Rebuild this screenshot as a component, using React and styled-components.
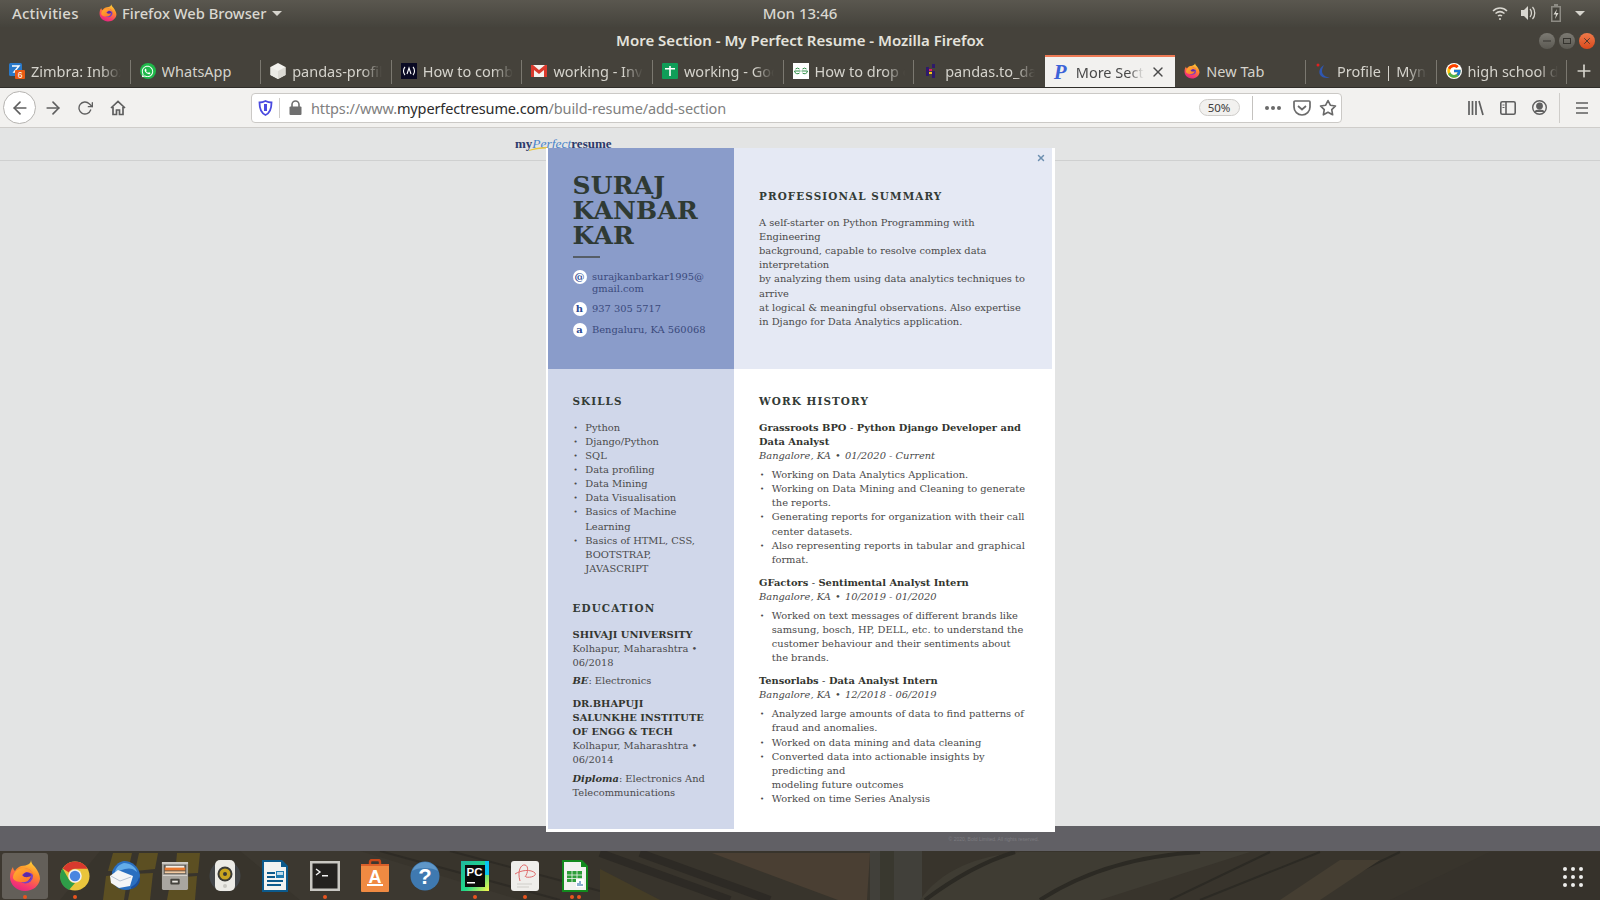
import React from "react";
import styled, { createGlobalStyle } from "styled-components";
import { FaWhatsapp } from "react-icons/fa";
import { FcGoogle } from "react-icons/fc";
import { FiArrowLeft, FiArrowRight, FiRotateCw, FiStar, FiX, FiPlus } from "react-icons/fi";

const GlobalStyle = createGlobalStyle`
  html, body { margin: 0; padding: 0; height: 100%; overflow: hidden; }
  body { font-family: "Noto Sans", sans-serif; background: #e3e4e4; }
  #root { height: 900px; }
  * { box-sizing: border-box; }
`;

const Screen = styled.div`
  width: 1600px;
  height: 900px;
  display: flex;
  flex-direction: column;
  overflow: hidden;
`;

/* desktop panel + window title */
const TopBar = styled.div`
  height: 27px;
  flex: none;
  display: flex;
  align-items: center;
  position: relative;
  padding: 0 0 1px 12px;
  color: #d9d7d0;
  font-size: 15px;
  font-weight: 500;
  background: linear-gradient(#5a574f, #45433c);
`;

const Activities = styled.span`
  width: 87px;
  letter-spacing: 0.2px;
`;

const AppMenu = styled.div`
  display: flex;
  align-items: center;
  gap: 5px;
  font-size: 14.7px;
`;

const Caret = styled.i`
  display: block;
  width: 0;
  height: 0;
  border-left: 5px solid transparent;
  border-right: 5px solid transparent;
  border-top: 5px solid #d6d4cd;
`;

const Clock = styled.span`
  position: absolute;
  left: 0;
  right: 0;
  top: 3px;
  text-align: center;
  pointer-events: none;
`;

const Tray = styled.div`
  margin-left: auto;
  display: flex;
  align-items: center;
  gap: 13.5px;
  padding-right: 15px;
`;

const TitleBar = styled.div`
  height: 28px;
  flex: none;
  position: relative;
  display: flex;
  align-items: center;
  justify-content: center;
  padding-bottom: 2px;
  color: #e4e2dc;
  font-size: 15px;
  font-weight: 600;
  background: #45423b;
`;

const WindowButtons = styled.div`
  position: absolute;
  right: 5px;
  top: 6px;
  display: flex;
  gap: 4px;
`;

const WindowButton = styled.span`
  width: 16px;
  height: 16px;
  border-radius: 50%;
  display: flex;
  align-items: center;
  justify-content: center;
  color: #35332e;
  background: ${(p) => (p.$close ? "linear-gradient(#ee7a4a, #d9491c)" : "linear-gradient(#7c7a73, #5b5952)")};
`;

const TabStrip = styled.div`
  height: 33px;
  flex: none;
  display: flex;
  background: #45423b;
  border-bottom: 1px solid #2f2d29;
`;

const Tab = styled.div`
  width: 130.6px;
  flex: none;
  height: 32px;
  display: flex;
  align-items: center;
  padding-left: 9px;
  gap: 6px;
  font-size: 14.5px;
  color: ${(p) => (p.$active ? "#4a4a4a" : "#d5d3cc")};
  background: ${(p) => (p.$active ? "#f2f1ef" : "transparent")};
  border-top: ${(p) => (p.$active ? "2px solid #ee7a55" : "0")};
  position: relative;
  &::after {
    content: "";
    display: ${(p) => (p.$sep ? "block" : "none")};
    position: absolute;
    right: 0;
    top: 5px;
    height: 24px;
    width: 1px;
    background: #7b7870;
  }
`;

const TabIcon = styled.span`
  width: 16px;
  height: 16px;
  flex: none;
  display: flex;
`;

const TabLabel = styled.span`
  width: ${(p) => p.$w || 90}px;
  flex: none;
  overflow: hidden;
  white-space: nowrap;
  -webkit-mask-image: ${(p) => (p.$plain ? "none" : "linear-gradient(90deg, #000 78%, transparent)")};
  mask-image: ${(p) => (p.$plain ? "none" : "linear-gradient(90deg, #000 78%, transparent)")};
`;

const NewTab = styled.div`
  flex: 1;
  display: flex;
  align-items: center;
  justify-content: center;
  color: #d5d3cc;
`;

const WhatsappBadge = styled.span`
  width: 16px;
  height: 16px;
  border-radius: 50%;
  background: #1fb84a;
  color: #fff;
  display: flex;
  align-items: center;
  justify-content: center;
`;

/* navigation toolbar */
const NavBar = styled.div`
  height: 40px;
  flex: none;
  display: flex;
  align-items: center;
  background: #f2f1ef;
  border-bottom: 1px solid #cfcdca;
  padding-left: 3px;
  color: #5f5f5f;
`;

const BackButton = styled.div`
  width: 33px;
  height: 33px;
  flex: none;
  border-radius: 50%;
  border: 1px solid #b5b3b0;
  background: #fff;
  display: flex;
  align-items: center;
  justify-content: center;
`;

const NavButton = styled.div`
  width: 32.5px;
  flex: none;
  display: flex;
  align-items: center;
  justify-content: center;
`;

const NavGroup = styled.div`
  display: flex;
  margin-right: 117px;
  margin-left: 0.5px;
`;

const AddressBar = styled.div`
  width: 1091px;
  height: 30px;
  flex: none;
  display: flex;
  align-items: center;
  background: #fff;
  border: 1px solid #cbc9c6;
  border-radius: 4px;
`;

const ShieldBox = styled.div`
  width: 28px;
  height: 20px;
  flex: none;
  display: flex;
  align-items: center;
  justify-content: center;
  border-right: 1px solid #cfcdca;
`;

const LockBox = styled.div`
  width: 31px;
  flex: none;
  display: flex;
  justify-content: center;
`;

const UrlText = styled.span`
  font-size: 14.5px;
  letter-spacing: -0.13px;
  color: #808080;
  white-space: nowrap;
  b { font-weight: 400; color: #2b2b2b; }
`;

const ZoomPill = styled.span`
  margin-left: auto;
  width: 41px;
  height: 17px;
  border: 1px solid #cfcdca;
  border-radius: 9px;
  background: #f2f1ef;
  color: #3c3c3c;
  font-size: 11.5px;
  display: flex;
  align-items: center;
  justify-content: center;
`;

const PageActions = styled.div`
  display: flex;
  align-items: center;
  height: 24px;
  margin-left: 12px;
  padding-left: 8.5px;
  padding-right: 4px;
  gap: 8px;
  border-left: 1px solid #c4c2bf;
`;

const Tools = styled.div`
  flex: 1;
  display: flex;
  align-items: center;
  padding-left: 126px;
  gap: 16px;
`;

const ToolDivider = styled.i`
  display: block;
  width: 1px;
  height: 30px;
  margin: 0 -1px 0 -4px;
  background: #cfcdca;
`;

/* page */
const Page = styled.div`
  flex: 1;
  min-height: 0;
  position: relative;
  display: flex;
  flex-direction: column;
  background: #e3e4e4;
`;

const SiteHeader = styled.div`
  height: 33px;
  flex: none;
  padding: 8px 0 0 515px;
  border-bottom: 1px solid #cfd0d0;
  font-family: "Liberation Serif", serif;
  font-size: 13px;
  line-height: 15px;
  font-weight: 700;
  color: #2d3a6b;
`;

const LogoMark = styled.em`
  color: #4a83c8;
  font-weight: 400;
  font-size: 13.5px;
`;

const LogoSwoosh = styled.svg`
  position: absolute;
  left: 529px;
  top: 18px;
`;

const PageBody = styled.div`
  flex: 1;
`;

const SiteFooter = styled.div`
  height: 25px;
  flex: none;
  background: #616065;
  color: #7d7c81;
  font-family: "Liberation Sans", sans-serif;
  font-size: 5px;
  text-align: right;
  padding: 10px 561px 0 0;
`;

/* resume preview */
const Modal = styled.div`
  position: absolute;
  left: 546px;
  top: 20px;
  width: 509px;
  height: 684px;
  padding: 0 3px 3px 2px;
  background: #fff;
  display: grid;
  grid-template-columns: 186px 318px;
  grid-template-rows: 221px 460px;
  font-family: "DejaVu Serif", serif;
  font-size: 9.9px;
  line-height: 14.15px;
  color: #4a4a4a;
`;

const CloseMark = styled.span`
  position: absolute;
  top: 5px;
  right: 9px;
  color: #6d8fb0;
  display: flex;
`;

const NameCell = styled.div`
  background: #8a9cca;
  padding: 25px 24.5px 0;
`;

const Name = styled.h1`
  margin: 0;
  font-size: 25px;
  line-height: 25px;
  font-weight: 700;
  letter-spacing: 0.2px;
  color: #2f3a34;
`;

const NameRule = styled.div`
  width: 27px;
  height: 2px;
  margin: 8px 0 13px;
  background: #565e68;
`;

const ContactRow = styled.div`
  display: flex;
  gap: 5.5px;
  margin-bottom: 8px;
  color: #3a4a7c;
  line-height: 12px;
`;

const ContactBadge = styled.span`
  width: 14px;
  height: 14px;
  flex: none;
  margin-top: -1px;
  border-radius: 50%;
  background: #fff;
  color: #2c4a94;
  font-size: 10px;
  font-weight: 700;
  line-height: 13px;
  text-align: center;
`;

const ContactText = styled.span`
  overflow-wrap: anywhere;
  min-width: 0;
`;

const SummaryCell = styled.div`
  background: #e5e9f4;
  padding: 41px 25px 0;
`;

const SideCell = styled.div`
  background: #d0d7ea;
  padding: 25px 24.5px 0;
`;

const MainCell = styled.div`
  background: #fff;
  padding: 25px 25px 0;
`;

const Heading = styled.h2`
  margin: ${(p) => p.$top || 0}px 0 12.5px;
  font-size: 10.4px;
  line-height: 14px;
  font-weight: 700;
  letter-spacing: 1.1px;
  color: #333b36;
`;

const Paragraph = styled.p`
  margin: 0;
  line-height: 14.2px;
`;

const BulletList = styled.ul`
  list-style: none;
  margin: 0 0 ${(p) => p.$after || 0}px;
  padding: 0;
`;

const Bullet = styled.li`
  display: flex;
  &::before {
    content: "•";
    flex: none;
    width: 11.8px;
    padding-left: 1px;
    font-size: 7px;
  }
`;

const Strong = styled.div`
  font-weight: 700;
  color: #33352f;
  margin-top: ${(p) => p.$top || 0}px;
`;

const Dash = styled.span`
  font-weight: 400;
`;

const JobMeta = styled.div`
  font-style: italic;
  margin-bottom: 5px;
`;

const MetaDot = styled.span`
  margin: 0 1px;
`;

const Degree = styled.div`
  margin-top: 4px;
  b { font-style: italic; color: #33352f; }
`;

/* dock */
const Dock = styled.div`
  height: 49px;
  flex: none;
  position: relative;
  display: flex;
  background: #37332c;
  overflow: hidden;
`;

const Wallpaper = styled.svg`
  position: absolute;
  left: 0;
  top: 0;
`;

const DockItem = styled.div`
  width: 50px;
  height: 49px;
  flex: none;
  position: relative;
  display: flex;
  align-items: center;
  justify-content: center;
  &::before {
    content: "";
    display: ${(p) => (p.$focus ? "block" : "none")};
    position: absolute;
    left: 2px;
    right: 2px;
    top: 2px;
    bottom: 1px;
    border-radius: 3px;
    background: rgba(255, 255, 255, 0.2);
  }
`;

const DockIcon = styled.span`
  position: relative;
  display: flex;
`;

const DockDots = styled.div`
  position: absolute;
  bottom: 1px;
  left: 0;
  right: 0;
  display: flex;
  justify-content: center;
  gap: 3px;
`;

const Dot = styled.i`
  width: 4px;
  height: 4px;
  border-radius: 50%;
  background: #e9541f;
`;

const AppGrid = styled.div`
  position: absolute;
  right: 17px;
  top: 16px;
  display: grid;
  grid-template-columns: repeat(3, 4px);
  gap: 4px;
  i { width: 4px; height: 4px; border-radius: 50%; background: #eeeeec; }
`;

const Firefox = ({ size = 16 }) => (
  <svg width={size} height={size} viewBox="0 0 32 32">
    <defs>
      <linearGradient id="ffOuter" x1="0.75" y1="0" x2="0.35" y2="1">
        <stop offset="0" stopColor="#ffdc3c" />
        <stop offset="0.4" stopColor="#ff8a2a" />
        <stop offset="0.8" stopColor="#f7396f" />
        <stop offset="1" stopColor="#e3267f" />
      </linearGradient>
      <linearGradient id="ffTail" x1="0" y1="0" x2="1" y2="1">
        <stop offset="0" stopColor="#ffb52e" />
        <stop offset="1" stopColor="#ff6a2c" />
      </linearGradient>
    </defs>
    <path d="M22 0c0 3 2 5 4 7 3 4 5 8 5 12-1 7-7 12-15 12C8 31 1 25 1 17c0-4 1-7 3-10 0 2 1 3 2 4 1-2 3-4 6-5 3 0 6-1 8-2 1-1 2-2 2-4z" fill="url(#ffOuter)" />
    <circle cx="16.5" cy="16" r="7.5" fill="#7a3fc4" />
    <circle cx="18" cy="16.5" r="4" fill="#5a2aa8" />
    <path d="M4 18c0-6 5-10 11-10 5 0 9 3 10 8-2-3-5-4-8-4l-3 2c-1 1-1 2 0 2 2 2 6 1 8 0-1 4-5 7-9 6-4 0-8-1-9-4z" fill="url(#ffTail)" />
  </svg>
);

const Chrome = () => (
  <svg width="30" height="30" viewBox="0 0 32 32">
    <circle cx="16" cy="16" r="15.5" fill="#e9c53c" />
    <path d="M16 .5A15.5 15.5 0 0 1 29.4 8.3H16a7.5 7.5 0 0 0-6.5 3.900L2.800 8A15.500 15.500 0 0 1 16 .5z" fill="#d8392e" />
    <path d="M2.800 8l6.700 11.700a7.500 7.500 0 0 0 6.500 3.800L9.500 31A15.500 15.500 0 0 1 2.800 8z" fill="#2f9e48" />
    <circle cx="16" cy="16" r="7.2" fill="#f2f2f2" />
    <circle cx="16" cy="16" r="5.6" fill="#4a86e0" />
  </svg>
);

const Thunderbird = () => (
  <svg width="32" height="32" viewBox="0 0 32 32">
    <path d="M15 1c8 0 15 6 16 14 0 8-6 15-14 15-6 0-11-3-13-8L3 12C5 6 9 2 15 1z" fill="#2a6fc0" />
    <path d="M15 3c6 0 12 4 13 9-4-4-8-4-12-3L6 12c1-5 5-8 9-9z" fill="#63ace8" />
    <path d="M1 16l8-6 15 6-3 10-11 2-8-5z" fill="#f4f5f7" />
    <path d="M2 16l9 5 11-4" fill="none" stroke="#b9c3d2" strokeWidth="1" />
    <path d="M22 27c4-2 7-5 8-10l1 2c0 5-4 9-9 10z" fill="#1c4e9a" />
  </svg>
);

const Files = () => (
  <svg width="28" height="32" viewBox="0 0 30 32">
    <rect x="1" y="1" width="28" height="30" rx="1.5" fill="#a9a6a0" />
    <rect x="1" y="1" width="28" height="2" fill="#cfccc6" />
    <rect x="3" y="4" width="24" height="10" fill="#5d5a54" />
    <rect x="5" y="5" width="20" height="3" fill="#f2f0ea" />
    <rect x="4" y="7" width="22" height="3" fill="#e8782e" />
    <rect x="4" y="11" width="22" height="2" fill="#f2c9a0" />
    <rect x="2" y="15" width="26" height="1" fill="#d8d5cf" />
    <rect x="10" y="19" width="10" height="6" rx="1" fill="#45433d" />
    <rect x="12" y="21" width="6" height="2" fill="#e8e6e0" />
  </svg>
);

const Speaker = () => (
  <svg width="32" height="34" viewBox="0 0 32 34">
    <circle cx="16" cy="17" r="15.5" fill="#5a6b80" opacity="0.35" />
    <rect x="6" y="1" width="20" height="31" rx="5" fill="#ecebe6" />
    <circle cx="16" cy="15" r="7.5" fill="#3a3a36" />
    <circle cx="16" cy="15" r="5.5" fill="#c9a520" />
    <circle cx="16" cy="15" r="2" fill="#3a3a36" />
    <circle cx="16" cy="27" r="2" fill="#c9c8c2" />
  </svg>
);

const Writer = () => (
  <svg width="26" height="32" viewBox="0 0 26 32">
    <path d="M0 0h20l6 6v26H0z" fill="#0c5a8c" />
    <path d="M2 2h17l5 5v23H2z" fill="#f2f2f0" />
    <path d="M19 0l7 7h-7z" fill="#0c5a8c" />
    <path d="M5 12h8v2H5zM5 16h8v2H5zM5 20h16v2H5zM5 24h14v2H5z" fill="#0c5a8c" />
    <rect x="14" y="11" width="8" height="7" fill="#1f7ab0" />
    <rect x="15" y="12" width="6" height="3" fill="#bfdcec" />
  </svg>
);

const Terminal = () => (
  <svg width="30" height="30" viewBox="0 0 30 30">
    <rect x="0" y="0" width="30" height="30" fill="#c9c7c2" />
    <rect x="2.5" y="2.5" width="25" height="25" fill="#23211f" />
    <path d="M6 8l4 3-4 3" fill="none" stroke="#f2f2f2" strokeWidth="1.4" />
    <rect x="12" y="14" width="6" height="1.5" fill="#f2f2f2" />
  </svg>
);

const Software = () => (
  <svg width="28" height="34" viewBox="0 0 28 34">
    <path d="M9 6V3c0-1 1-2 2-2h6c1 0 2 1 2 2v3" fill="none" stroke="#c9481a" strokeWidth="2.4" />
    <path d="M0 6h28v26a1 1 0 0 1-1 1H1a1 1 0 0 1-1-1z" fill="#f08a42" />
    <rect x="0" y="5" width="28" height="2" fill="#d9602a" />
    <text x="14" y="24" textAnchor="middle" fontFamily="Liberation Sans" fontWeight="700" fontSize="18" fill="#fff">A</text>
    <rect x="6" y="25" width="16" height="2" fill="#fff" />
  </svg>
);

const Help = () => (
  <svg width="30" height="30" viewBox="0 0 30 30">
    <circle cx="15" cy="15" r="14.5" fill="#3f79b0" />
    <path d="M15 1a14 14 0 0 1 13 9C22 6 8 6 2 10A14 14 0 0 1 15 1z" fill="#5f97c9" />
    <text x="15" y="23" textAnchor="middle" fontFamily="Liberation Sans" fontWeight="700" fontSize="22" fill="#fff">?</text>
  </svg>
);

const PyCharm = () => (
  <svg width="28" height="30" viewBox="0 0 28 30">
    <defs>
      <linearGradient id="pcBg" x1="0" y1="0" x2="1" y2="1">
        <stop offset="0" stopColor="#1fb6a0" />
        <stop offset="0.55" stopColor="#21d789" />
        <stop offset="1" stopColor="#fcf84a" />
      </linearGradient>
    </defs>
    <rect width="28" height="30" fill="url(#pcBg)" />
    <rect x="24" y="0" width="4" height="14" fill="#07c3f2" />
    <rect x="4" y="4" width="20" height="22" fill="#0b0b0b" />
    <text x="5.5" y="15" fontFamily="Liberation Sans" fontWeight="700" fontSize="11.5" fill="#fff">PC</text>
    <rect x="6" y="21" width="8" height="1.5" fill="#fff" />
  </svg>
);

const Evince = () => (
  <svg width="28" height="30" viewBox="0 0 28 30">
    <rect x="0" y="0" width="28" height="30" rx="3" fill="#efeeeb" />
    <path d="M4 13c6-4 16-5 20-1 2 3-5 5-9 4M9 20C6 10 10 3 14 4c4 1 3 8 0 12" fill="none" stroke="#e06a6a" strokeWidth="1" />
    <path d="M6 23h15M6 26h12" stroke="#cfcec9" strokeWidth="1" />
  </svg>
);

const Calc = () => (
  <svg width="26" height="32" viewBox="0 0 26 32">
    <path d="M0 0h20l6 6v26H0z" fill="#138a1e" />
    <path d="M2 2h17l5 5v23H2z" fill="#f2f2f0" />
    <path d="M19 0l7 7h-7z" fill="#138a1e" />
    <rect x="5" y="11" width="15" height="11" fill="#2d9e3a" />
    <path d="M5 15h15M5 18.5h15M10 11v11M15 11v11" stroke="#f2f2f0" strokeWidth="0.8" />
    <rect x="14" y="19" width="8" height="8" fill="#fff" />
    <path d="M16 26v-3M18 26v-5M20 26v-2" stroke="#3f79b0" strokeWidth="1.2" />
  </svg>
);

const Zimbra = () => (
  <svg width="16" height="16" viewBox="0 0 16 16">
    <rect width="13" height="13" rx="1.5" fill="#2a79c9" />
    <path d="M3 3h7L5 9h5" fill="none" stroke="#fff" strokeWidth="1.4" />
    <rect x="6" y="7" width="10" height="9" rx="1" fill="#ea5a14" />
    <text x="11" y="15" textAnchor="middle" fontFamily="Liberation Sans" fontSize="8.5" fill="#fff">6</text>
  </svg>
);

const Cube = () => (
  <svg width="16" height="16" viewBox="0 0 16 16">
    <path d="M8 0l7.500 4v8L8 16 .5 12V4z" fill="#f4f3ef" />
    <path d="M8 8l7.500-4v8L8 16z" fill="#dcdad4" />
    <path d="M8 8L.5 4v8L8 16z" fill="#ecebe6" />
  </svg>
);

const CodeCamp = () => (
  <svg width="16" height="16" viewBox="0 0 16 16">
    <rect width="16" height="16" fill="#0a0a23" />
    <path d="M4 4C2 6 2 10 4 12M12 4c2 2 2 6 0 8M6 11l2-6 2 6" fill="none" stroke="#fff" strokeWidth="1.1" />
  </svg>
);

const Gmail = () => (
  <svg width="16" height="16" viewBox="0 0 16 16">
    <rect y="2" width="16" height="12" fill="#f4f3ef" />
    <path d="M0 2h2l6 5 6-5h2v12h-3V7L8 11 3 7v7H0z" fill="#d93a2d" />
  </svg>
);

const Sheets = () => (
  <svg width="16" height="16" viewBox="0 0 16 16">
    <rect width="16" height="16" rx="1" fill="#0f9d58" />
    <path d="M3 5h4.200V3h1.600v2H13v1.600H8.800V13H7.200V6.600H3z" fill="#fff" />
  </svg>
);

const GeeksIcon = () => (
  <svg width="16" height="16" viewBox="0 0 16 16">
    <rect width="16" height="16" fill="#fff" />
    <path d="M7.500 8H1.500a3 3 0 0 0 5 2M8.500 8h6a3 3 0 0 1-5 2M6.500 6a3 3 0 0 0-4 0M9.500 6a3 3 0 0 1 4 0" fill="none" stroke="#2f8d46" strokeWidth="1" />
  </svg>
);

const PandasIcon = () => (
  <svg width="16" height="16" viewBox="0 0 16 16">
    <path d="M3 4h3v9H3zM9 1h3v4H9zM9 8h3v7H9z" fill="#2e1a6b" />
    <path d="M6 6h3v2H6z" fill="#e8166b" />
    <path d="M6 9h3v2H6z" fill="#f5c518" />
  </svg>
);

const Myna = () => (
  <svg width="16" height="16" viewBox="0 0 16 16">
    <path d="M9 2C4 5 3 10 6 13c2 2 6 2 9 2-4-1-8-3-8-7 0-2 1-4 2-6z" fill="#2f56b0" />
    <circle cx="3" cy="2" r="1.5" fill="#e02020" />
  </svg>
);

const ResumeP = styled.span`
  font-family: "Liberation Serif", serif;
  font-style: italic;
  font-weight: 700;
  font-size: 21px;
  line-height: 16px;
  color: #3d63d8;
`;

const tabs = [
  { icon: <Zimbra />, label: "Zimbra: Inbox (6)", sep: true },
  { icon: <WhatsappBadge><FaWhatsapp size={13} /></WhatsappBadge>, label: "WhatsApp", sep: true, plain: true },
  { icon: <Cube />, label: "pandas-profiling", sep: true },
  { icon: <CodeCamp />, label: "How to combine", sep: true },
  { icon: <Gmail />, label: "working - Invites", sep: true },
  { icon: <Sheets />, label: "working - Google", sep: true },
  { icon: <GeeksIcon />, label: "How to drop one", sep: true },
  { icon: <PandasIcon />, label: "pandas.to_datetime" },
  { icon: <ResumeP>P</ResumeP>, label: "More Section", active: true, w: 68 },
  { icon: <Firefox />, label: "New Tab", sep: true, plain: true },
  { icon: <Myna />, label: "Profile | Myna", sep: true },
  { icon: <FcGoogle size={16} style={{ background: "#fff", borderRadius: "50%" }} />, label: "high school diploma", sep: true },
];

const dockApps = [
  { icon: <Firefox size={32} />, dots: 1, focus: true },
  { icon: <Chrome />, dots: 1 },
  { icon: <Thunderbird /> },
  { icon: <Files /> },
  { icon: <Speaker /> },
  { icon: <Writer /> },
  { icon: <Terminal />, dots: 1 },
  { icon: <Software /> },
  { icon: <Help /> },
  { icon: <PyCharm />, dots: 1 },
  { icon: <Evince />, dots: 1 },
  { icon: <Calc />, dots: 2 },
];

const skills = [
  "Python",
  "Django/Python",
  "SQL",
  "Data profiling",
  "Data Mining",
  "Data Visualisation",
  "Basics of Machine Learning",
  "Basics of HTML, CSS, BOOTSTRAP, JAVASCRIPT",
];

const jobs = [
  {
    company: "Grassroots BPO",
    role: "Python Django Developer and Data Analyst",
    place: "Bangalore, KA",
    dates: "01/2020 - Current",
    points: [
      "Working on Data Analytics Application.",
      "Working on Data Mining and Cleaning to generate the reports.",
      "Generating reports for organization with their call center datasets.",
      "Also representing reports in tabular and graphical format.",
    ],
  },
  {
    company: "GFactors",
    role: "Sentimental Analyst Intern",
    place: "Bangalore, KA",
    dates: "10/2019 - 01/2020",
    points: [
      "Worked on text messages of different brands like samsung, bosch, HP, DELL, etc. to understand the customer behaviour and their sentiments about the brands.",
    ],
  },
  {
    company: "Tensorlabs",
    role: "Data Analyst Intern",
    place: "Bangalore, KA",
    dates: "12/2018 - 06/2019",
    points: [
      "Analyzed large amounts of data to find patterns of fraud and anomalies.",
      "Worked on data mining and data cleaning",
      <>Converted data into actionable insights by predicting and<br />modeling future outcomes</>,
      "Worked on time Series Analysis",
    ],
  },
];

function App() {
  return (
    <Screen>
      <GlobalStyle />
      <TopBar>
        <Activities>Activities</Activities>
        <AppMenu>
          <Firefox size={18} />
          <span>Firefox Web Browser</span>
          <Caret />
        </AppMenu>
        <Clock>Mon 13:46</Clock>
        <Tray>
          <svg width="16" height="16" viewBox="0 0 16 16" fill="none" stroke="#d9d7d0" strokeWidth="1.5">
            <path d="M1 6c4-4 10-4 14 0M3.500 8.500c3-2.500 6-2.500 9 0M6 11c1.200-1 2.800-1 4 0" />
            <circle cx="8" cy="14" r="1" fill="#d9d7d0" stroke="none" />
          </svg>
          <svg width="15" height="16" viewBox="0 0 15 16" fill="#d9d7d0">
            <path d="M0 5h3l4-4v14l-4-4H0z" />
            <path d="M9 4c2 2 2 6 0 8M11.500 2c3 3 3 9 0 12" fill="none" stroke="#d9d7d0" strokeWidth="1.3" />
          </svg>
          <svg width="12" height="18" viewBox="0 0 12 18">
            <path d="M4 0h4v2h3v16H1V2h3z" fill="#8d8b84" />
            <path d="M2.500 3.500h7v13h-7z" fill="#45433c" />
            <path d="M7 5L3.500 10.500H6L5 15l3.500-6H6z" fill="#d9d7d0" />
          </svg>
          <Caret />
        </Tray>
      </TopBar>

      <TitleBar>
        More Section - My Perfect Resume - Mozilla Firefox
        <WindowButtons>
          <WindowButton>
            <svg width="8" height="8" viewBox="0 0 8 8"><path d="M0 4h8" stroke="currentColor" /></svg>
          </WindowButton>
          <WindowButton>
            <svg width="8" height="8" viewBox="0 0 8 8"><rect x="0.5" y="1.5" width="7" height="5" fill="none" stroke="currentColor" /></svg>
          </WindowButton>
          <WindowButton $close>
            <FiX size={10} />
          </WindowButton>
        </WindowButtons>
      </TitleBar>

      <TabStrip>
        {tabs.map((t) => (
          <Tab key={t.label} $active={t.active} $sep={t.sep}>
            <TabIcon>{t.icon}</TabIcon>
            <TabLabel $w={t.w} $plain={t.plain}>{t.label}</TabLabel>
            {t.active && <FiX size={16} color="#4a4a4a" />}
          </Tab>
        ))}
        <NewTab><FiPlus size={20} /></NewTab>
      </TabStrip>

      <NavBar>
        <BackButton><FiArrowLeft size={20} /></BackButton>
        <NavGroup>
          <NavButton><FiArrowRight size={20} /></NavButton>
          <NavButton><FiRotateCw size={16} /></NavButton>
          <NavButton>
            <svg width="16" height="16" viewBox="0 0 16 16" fill="none" stroke="currentColor" strokeWidth="1.7">
              <path d="M1 8l7-6.500L15 8M3 7v7.500h3.500V10h3v4.500H13V7" />
            </svg>
          </NavButton>
        </NavGroup>
        <AddressBar>
          <ShieldBox>
            <svg width="15" height="16" viewBox="0 0 15 16">
              <path d="M7.500 1c2 1 4 1.500 6 1.500 0 6-1.500 10.500-6 12.500-4.500-2-6-6.500-6-12.500 2 0 4-.5 6-1.500z" fill="none" stroke="#4a4ae0" strokeWidth="1.8" />
              <path d="M7.500 4v7" stroke="#4a4ae0" strokeWidth="3" />
            </svg>
          </ShieldBox>
          <LockBox>
            <svg width="13" height="15" viewBox="0 0 13 15">
              <path d="M3 7V4.500a3.500 3.500 0 0 1 7 0V7" fill="none" stroke="#6f6f6f" strokeWidth="1.6" />
              <rect x="0.5" y="6.5" width="12" height="8.5" rx="1" fill="#6f6f6f" />
            </svg>
          </LockBox>
          <UrlText>https://www.<b>myperfectresume.com</b>/build-resume/add-section</UrlText>
          <ZoomPill>50%</ZoomPill>
          <PageActions>
            <svg width="24" height="16" viewBox="0 0 24 16" fill="#6a6a6a">
              <circle cx="6" cy="8" r="2" /><circle cx="12" cy="8" r="2" /><circle cx="18" cy="8" r="2" />
            </svg>
            <svg width="18" height="16" viewBox="0 0 18 16" fill="none" stroke="#6a6a6a" strokeWidth="1.7">
              <path d="M2 1h14a1 1 0 0 1 1 1v5a8 8 0 0 1-16 0V2a1 1 0 0 1 1-1z" />
              <path d="M5 6l4 3.500L13 6" />
            </svg>
            <FiStar size={18} color="#6a6a6a" strokeWidth={2.2} />
          </PageActions>
        </AddressBar>
        <Tools>
          <svg width="16" height="16" viewBox="0 0 16 16" stroke="#5f5f5f" strokeWidth="1.7">
            <path d="M1 1v14M4.500 1v14M8 1v14M11 1l4 14" />
          </svg>
          <svg width="16" height="14" viewBox="0 0 16 14" fill="none" stroke="#5f5f5f" strokeWidth="1.6">
            <rect x="0.8" y="0.8" width="14.4" height="12.4" rx="1.5" />
            <path d="M6 1v12" />
            <path d="M2.500 4h2M2.500 6.500h2" strokeWidth="1" />
          </svg>
          <svg width="15" height="15" viewBox="0 0 15 15" fill="none" stroke="#5f5f5f" strokeWidth="1.4">
            <circle cx="7.5" cy="7.5" r="6.8" />
            <circle cx="7.5" cy="6" r="2.7" fill="#5f5f5f" />
            <path d="M3 12c1-2.500 8-2.500 9 0" fill="#5f5f5f" />
          </svg>
          <ToolDivider />
          <svg width="14" height="12" viewBox="0 0 14 12" stroke="#5f5f5f" strokeWidth="1.7">
            <path d="M1 1h12M1 6h12M1 11h12" />
          </svg>
        </Tools>
      </NavBar>

      <Page>
        <SiteHeader>
          my<LogoMark>Perfect</LogoMark>resume
        </SiteHeader>
        <LogoSwoosh width="18" height="5" viewBox="0 0 18 5">
          <path d="M0 4c5-2 11-3 18-3v1.500C11 2.500 5 3.500 0 5z" fill="#e8c53a" />
        </LogoSwoosh>
        <PageBody />
        <SiteFooter>© 2020, Bold Limited. All rights reserved.</SiteFooter>

        <Modal>
          <CloseMark><FiX size={10} strokeWidth={3.5} /></CloseMark>
          <NameCell>
            <Name>SURAJ KANBAR KAR</Name>
            <NameRule />
            <ContactRow>
              <ContactBadge>@</ContactBadge>
              <ContactText>surajkanbarkar1995@gmail.com</ContactText>
            </ContactRow>
            <ContactRow>
              <ContactBadge>h</ContactBadge>
              <ContactText>937 305 5717</ContactText>
            </ContactRow>
            <ContactRow>
              <ContactBadge>a</ContactBadge>
              <ContactText>Bengaluru, KA 560068</ContactText>
            </ContactRow>
          </NameCell>
          <SummaryCell>
            <Heading>PROFESSIONAL SUMMARY</Heading>
            <Paragraph>
              A self-starter on Python Programming with Engineering<br />
              background, capable to resolve complex data interpretation<br />
              by analyzing them using data analytics techniques to arrive<br />
              at logical &amp; meaningful observations. Also expertise<br />
              in Django for Data Analytics application.
            </Paragraph>
          </SummaryCell>
          <SideCell>
            <Heading>SKILLS</Heading>
            <BulletList>
              {skills.map((s) => <Bullet key={s}>{s}</Bullet>)}
            </BulletList>
            <Heading $top={25}>EDUCATION</Heading>
            <Strong>SHIVAJI UNIVERSITY</Strong>
            <div>Kolhapur, Maharashtra • 06/2018</div>
            <Degree><b>BE</b>: Electronics</Degree>
            <Strong $top={8.5}>DR.BHAPUJI SALUNKHE INSTITUTE OF ENGG &amp; TECH</Strong>
            <div>Kolhapur, Maharashtra • 06/2014</div>
            <Degree><b>Diploma</b>: Electronics And Telecommunications</Degree>
          </SideCell>
          <MainCell>
            <Heading>WORK HISTORY</Heading>
            {jobs.map((job) => (
              <div key={job.company}>
                <Strong>{job.company} <Dash>-</Dash> {job.role}</Strong>
                <JobMeta>{job.place} <MetaDot>•</MetaDot> {job.dates}</JobMeta>
                <BulletList $after={8.5}>
                  {job.points.map((pt, i) => <Bullet key={i}><span>{pt}</span></Bullet>)}
                </BulletList>
              </div>
            ))}
          </MainCell>
        </Modal>
      </Page>

      <Dock>
        <Wallpaper width="1600" height="49" viewBox="0 0 1600 49">
          <rect width="1600" height="49" fill="#38342c" />
          <path d="M0 0h100L60 49H0z" fill="#3d3830" />
          <path d="M113 2h19l-4 18h-20zM139 2h19l-3 16-20 2zM106 25l22-2-4 26h-21zM133 23l20-1-3 27h-22zM177 2h23l-2 20-23 1zM171 27l26-2-2 24h-28z" fill="#5c4f22" />
          <path d="M240 0h120l160 49H300z" fill="#3c3830" />
          <path d="M380 0l180 49M450 0l150 40" stroke="#2e2b25" strokeWidth="2" fill="none" />
          <path d="M600 18l60 31H600z" fill="#453d26" />
          <path d="M600 2l130 47M640 2l130 47" stroke="#2d2a25" strokeWidth="8" fill="none" />
          <path d="M712 2h158l-3 47h-29z" fill="#4a3f33" />
          <rect x="870" y="0" width="52" height="49" fill="#41403a" />
          <path d="M880 0h14v49h-14z" fill="#39382f" />
          <path d="M920 49c20-30 60-45 100-48h230l-150 48z" fill="#3f3c33" />
          <path d="M925 49c40-30 70-42 90-48M1040 49c40-26 90-44 160-48" stroke="#2c2a24" strokeWidth="4" fill="none" />
          <path d="M1170 49l100-48M1200 49l120-48M1300 49l100-48" stroke="#2c2a24" strokeWidth="2" fill="none" />
          <path d="M1280 49l60-40h40l-60 40z" fill="#453e32" />
          <path d="M1390 49l100-48h110v48z" fill="#36322b" />
        </Wallpaper>
        {dockApps.map((app, i) => (
          <DockItem key={i} $focus={app.focus}>
            <DockIcon>{app.icon}</DockIcon>
            {app.dots && (
              <DockDots>
                {Array.from({ length: app.dots }).map((_, d) => <Dot key={d} />)}
              </DockDots>
            )}
          </DockItem>
        ))}
        <AppGrid>
          {Array.from({ length: 9 }).map((_, i) => <i key={i} />)}
        </AppGrid>
      </Dock>
    </Screen>
  );
}

export default App;
